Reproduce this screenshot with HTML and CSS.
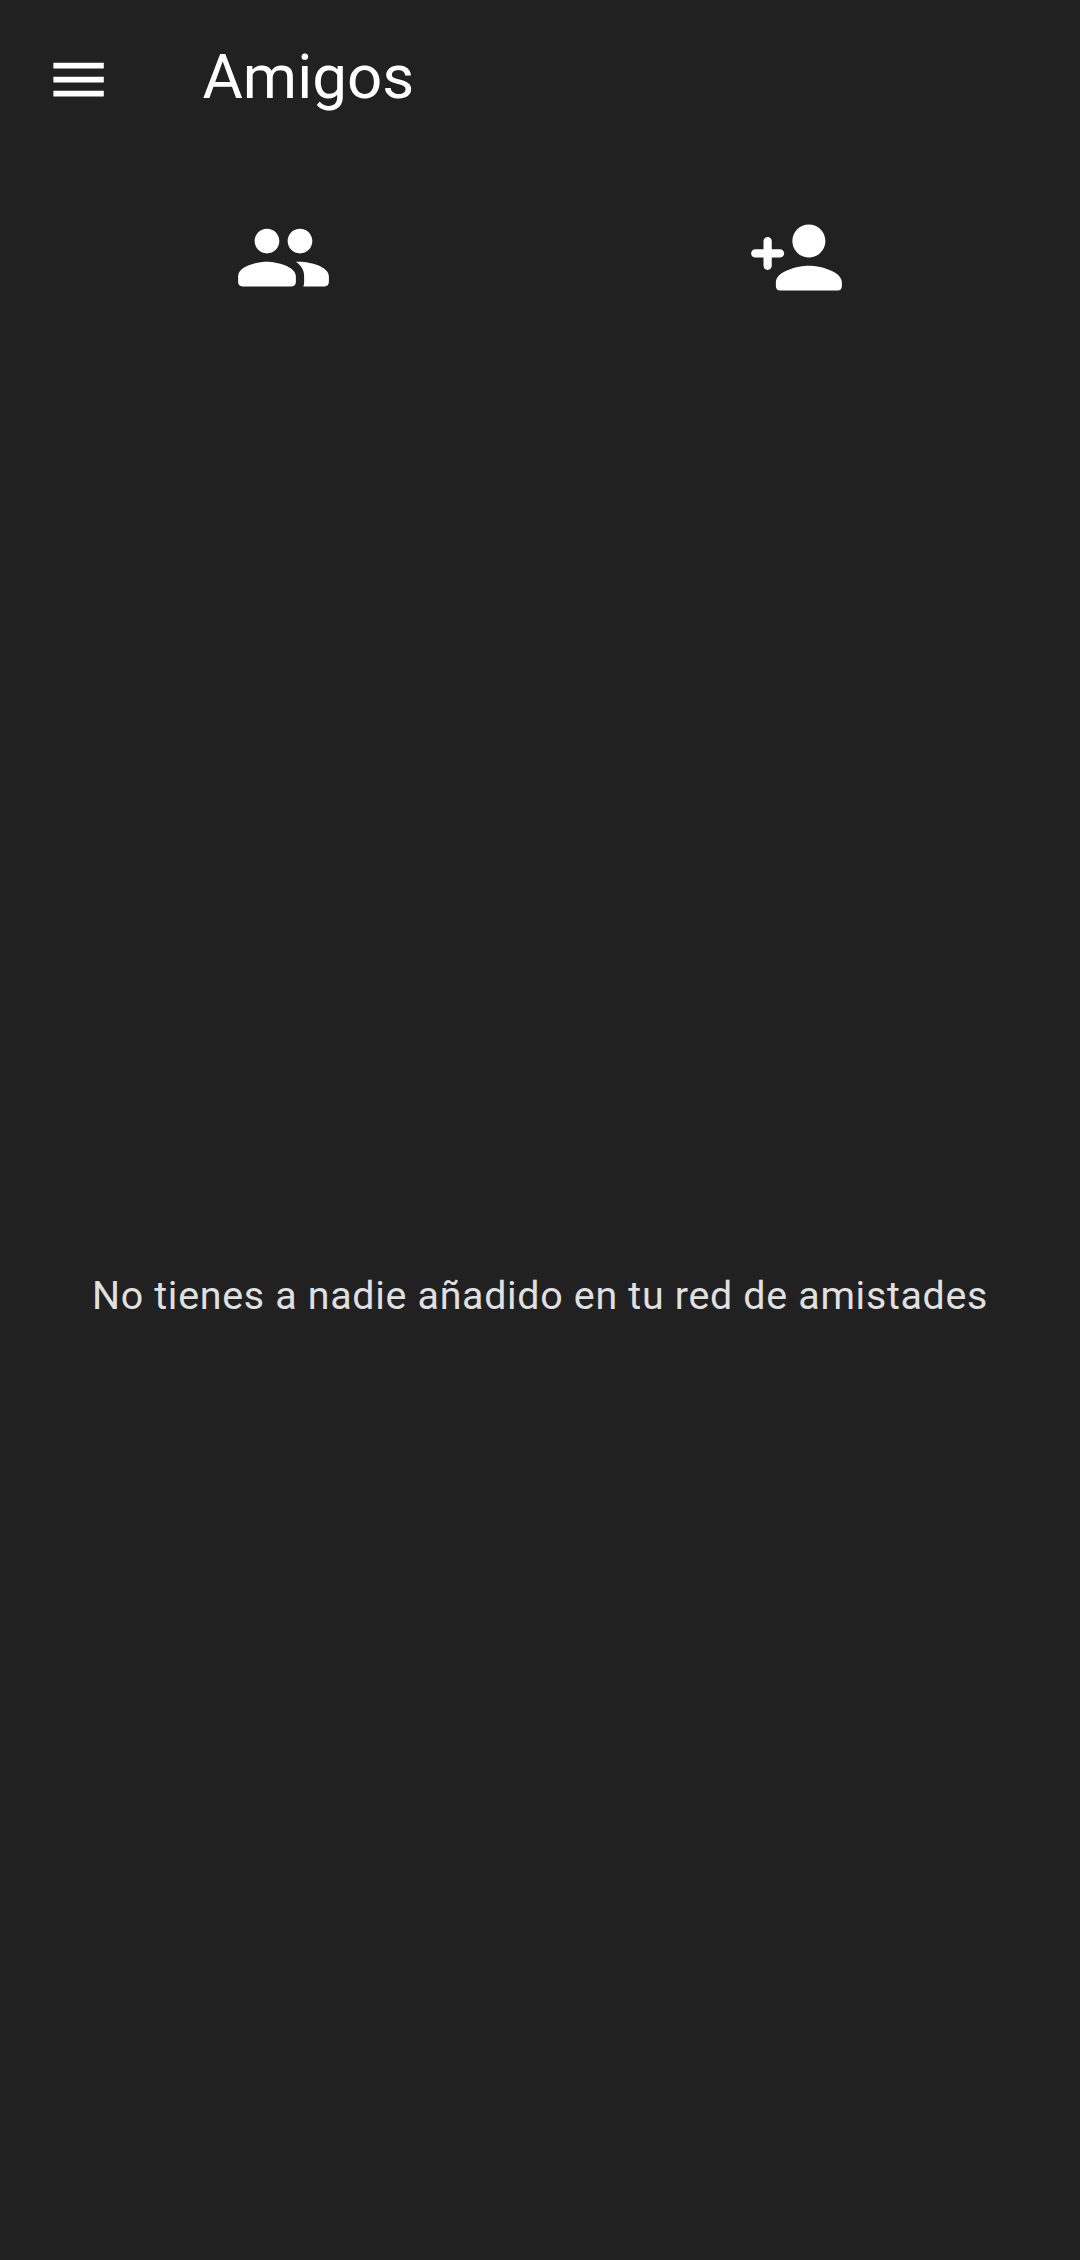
FILE: index.html
```html
<!DOCTYPE html>
<html lang="es">
<head>
<meta charset="utf-8">
<title>Amigos</title>
<link rel="stylesheet" href="styles.css">
</head>
<body>
<header class="toolbar">
<svg class="menu" viewBox="0 0 24 24" aria-label="Menú"><path d="M3 18h18v-2H3v2zm0-5h18v-2H3v2zm0-7v2h18V6H3z"/></svg>
<h1 class="title">Amigos</h1>
</header>
<nav class="tabs">
<div class="tab"><svg class="tab-icon" viewBox="0 0 24 24"><path d="M16 11c1.66 0 2.99-1.34 2.99-3S17.66 5 16 5s-3 1.34-3 3 1.34 3 3 3zm-8 0c1.66 0 2.99-1.34 2.99-3S9.66 5 8 5 5 6.340 5 8s1.340 3 3 3zm0 2c-2.330 0-7 1.170-7 3.500V18c0 .55.45 1 1 1h12c.55 0 1-.45 1-1v-1.500c0-2.330-4.670-3.500-7-3.500zm8 0c-.29 0-.62.02-.97.05.02.01.03.03.04.04 1.140.83 1.930 1.940 1.930 3.410V18c0 .35-.07.69-.18 1H22c.55 0 1-.45 1-1v-1.500c0-2.330-4.670-3.500-7-3.500z"/></svg></div>
<div class="tab"><svg class="tab-icon" viewBox="0 0 24 24"><path d="M15 12c2.210 0 4-1.790 4-4s-1.790-4-4-4-4 1.790-4 4 1.790 4 4 4zm-9-2V8c0-.55-.45-1-1-1s-1 .45-1 1v2H2c-.55 0-1 .45-1 1s.45 1 1 1h2v2c0 .55.45 1 1 1s1-.45 1-1v-2h2c.55 0 1-.45 1-1s-.45-1-1-1H6zm9 4c-2.670 0-8 1.340-8 4v1c0 .55.45 1 1 1h14c.55 0 1-.45 1-1v-1c0-2.660-5.330-4-8-4z"/></svg></div>
</nav>
<main class="empty"><p class="message">No tienes a nadie añadido en tu red de amistades</p></main>
</body>
</html>
```
FILE: styles.css
```css
body {
  margin: 0;
  height: 2260px;
  display: flex;
  flex-direction: column;
  background: #212121;
  color: #fff;
  font-family: Roboto, sans-serif;
}
svg { display: block; fill: #fff; }
.toolbar {
  height: 158px;
  box-sizing: border-box;
  padding: 45.600px 0 0 45px;
  display: flex;
  align-items: flex-start;
}
.menu { width: 67.200px; height: 67.200px; }
.title {
  margin: -4.600px 0 0 90.300px;
  font-size: 61.900px;
  line-height: 72px;
  font-weight: 400;
}
.tabs {
  height: 199px;
  padding: 0 27px;
  display: flex;
}
.tab { flex: 1; display: flex; justify-content: center; align-items: center; }
.tab-icon { width: 99px; height: 99px; }
.empty {
  flex: 1;
  padding-bottom: 26px;
  display: flex;
  justify-content: center;
  align-items: center;
}
.message {
  margin: 0;
  font-size: 39.375px;
  line-height: 47px;
  letter-spacing: 0.700px;
  color: #e0e0e0;
  white-space: nowrap;
}
```
